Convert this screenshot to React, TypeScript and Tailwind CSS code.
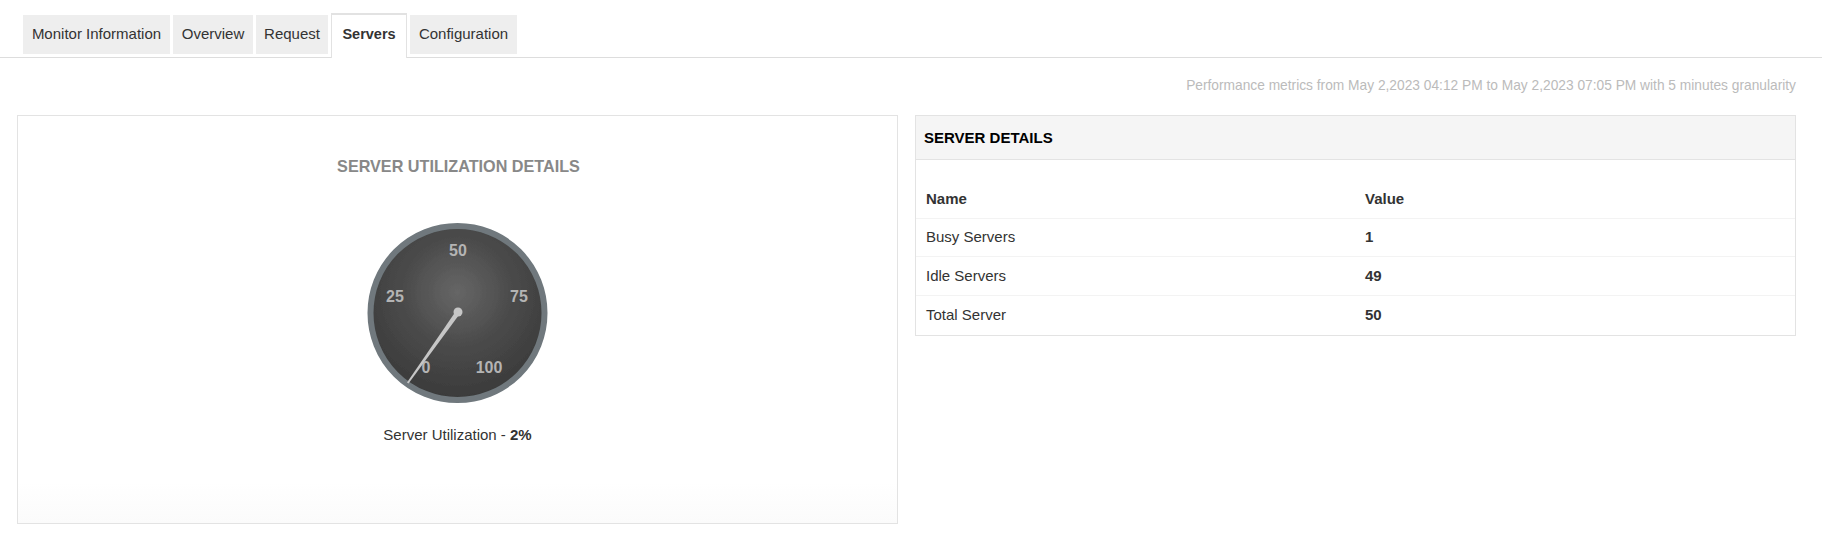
const tabs = [
  { label: "Monitor Information", width: "w-[147px]" },
  { label: "Overview", width: "w-[80px]" },
  { label: "Request", width: "w-[72px]" },
  { label: "Servers", width: "w-[76px]" },
  { label: "Configuration", width: "w-[107px]" },
];

const rows = [
  { name: "Busy Servers", value: "1", height: "h-[38px]" },
  { name: "Idle Servers", value: "49", height: "h-[39px]" },
  { name: "Total Server", value: "50", height: "h-[39px]" },
];

function Gauge() {
  return (
    <svg width="186" height="186" viewBox="0 0 186 186" className="block">
      <defs>
        <radialGradient id="face" cx="50%" cy="38%" r="64%">
          <stop offset="0%" stopColor="#666666" />
          <stop offset="50%" stopColor="#4a4a4a" />
          <stop offset="100%" stopColor="#393939" />
        </radialGradient>
        <filter id="soft" x="-5%" y="-5%" width="110%" height="110%">
          <feGaussianBlur stdDeviation="0.5" />
        </filter>
      </defs>
      <circle cx="92.5" cy="93" r="87" fill="url(#face)" stroke="#6f787d" strokeWidth="6" filter="url(#soft)" />
      <g fill="#b4b4b4" fontSize="16" fontWeight="700" textAnchor="middle" fontFamily="'Liberation Sans', sans-serif">
        <text x="93" y="36">50</text>
        <text x="30" y="82">25</text>
        <text x="154" y="82">75</text>
        <text x="61" y="153">0</text>
        <text x="124" y="153">100</text>
      </g>
      <path d="M91 91 L95 93.5 L43.5 163.5 L42 162.5 Z" fill="#c6c6c6" />
      <circle cx="93" cy="92" r="4.5" fill="#c6c6c6" />
    </svg>
  );
}

export default function App() {
  return (
    <div className="min-h-[543px] bg-white font-['Liberation_Sans',Arial,sans-serif] text-[15px] text-[#333]">
      <div className="flex h-[58px] items-end gap-[3px] border-b border-[#ddd] pl-[23px]">
        {tabs.map((tab) =>
          tab.label === "Servers" ? (
            <div
              key={tab.label}
              className={`-mb-px flex h-[45px] items-center justify-center border-x border-t-2 border-[#e2e2e2] bg-white pb-[3px] text-[14.5px] font-bold ${tab.width}`}
            >
              {tab.label}
            </div>
          ) : (
            <div key={tab.label} className={`mb-[3px] flex h-[39px] items-center justify-center bg-[#eee] ${tab.width}`}>
              {tab.label}
            </div>
          ),
        )}
      </div>

      <p className="mt-[19px] pr-[26px] text-right text-[13.75px] leading-[18px] text-[#bbb]">
        Performance metrics from May 2,2023 04:12 PM to May 2,2023 07:05 PM with 5 minutes granularity
      </p>

      <div className="mt-5 flex items-start gap-[17px] pl-[17px]">
        <section className="flex h-[409px] w-[881px] flex-col items-center border border-[#e3e3e3] bg-gradient-to-b from-white from-90% to-[#fbfbfb]">
          <h2 className="mt-[40px] ml-0.5 text-[16.2px] leading-5 font-bold text-[#888]">SERVER UTILIZATION DETAILS</h2>
          <div className="mt-[44px]">
            <Gauge />
          </div>
          <p className="mt-[19px] leading-5">
            Server Utilization - <b>2%</b>
          </p>
        </section>

        <section className="w-[881px] border border-[#e3e3e3] bg-white">
          <h2 className="flex h-[44px] items-center border-b border-[#e3e3e3] bg-[#f5f5f5] pl-2 leading-5 font-bold text-black">
            SERVER DETAILS
          </h2>
          <div className="pt-5">
            <div className="flex h-[39px] items-center border-b border-[#f3f3f3] px-[10px] font-bold">
              <span className="w-[439px]">Name</span>
              <span>Value</span>
            </div>
            {rows.map((row, i) => (
              <div
                key={row.name}
                className={`flex items-center px-[10px] ${row.height} ${i < rows.length - 1 ? "border-b border-[#f3f3f3]" : ""}`}
              >
                <span className="w-[439px]">{row.name}</span>
                <b>{row.value}</b>
              </div>
            ))}
          </div>
        </section>
      </div>
    </div>
  );
}
